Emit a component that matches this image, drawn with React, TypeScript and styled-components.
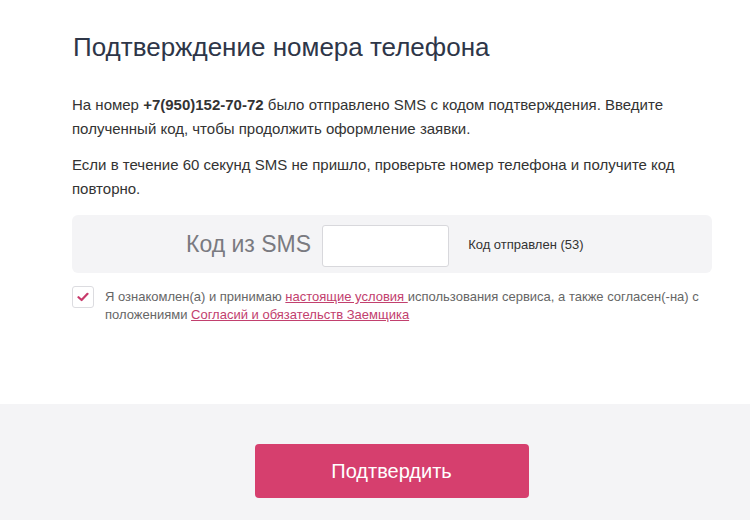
import styled, { createGlobalStyle } from "styled-components";

const GlobalStyle = createGlobalStyle`
  html, body {
    margin: 0;
    padding: 0;
    background: #ffffff;
    font-family: "Liberation Sans", Arial, sans-serif;
  }
`;

const Page = styled.div`
  width: 750px;
  height: 520px;
  display: flex;
  flex-direction: column;
  overflow: hidden;
`;

const Main = styled.div`
  height: 404px;
  box-sizing: border-box;
  padding: 29px 38px 0 72px;
`;

const Title = styled.h1`
  margin: 0 0 28px;
  font-size: 26px;
  font-weight: normal;
  line-height: 36px;
  color: #2e3648;
  padding-left: 1px;
`;

const Text = styled.p`
  margin: 0 0 12px;
  font-size: 15px;
  line-height: 24px;
  color: #333333;
`;

const SmsBox = styled.div`
  margin-top: 14px;
  height: 58px;
  background: #f4f4f6;
  border-radius: 6px;
  display: flex;
  align-items: center;
  padding-left: 114px;
`;

const SmsLabel = styled.label`
  font-size: 23px;
  color: #7a7a80;
  margin-right: 11px;
`;

const CodeInput = styled.input`
  width: 127px;
  height: 42px;
  box-sizing: border-box;
  border: 1px solid #d8d8dc;
  border-radius: 3px;
  background: #fff;
  margin-top: 4px;
  font-size: 18px;
  padding: 0 10px;
  outline: none;
`;

const SentNote = styled.span`
  font-size: 13px;
  color: #333;
  margin-left: 19px;
`;

const Agree = styled.div`
  display: flex;
  align-items: flex-start;
  margin-top: 13px;
  gap: 11px;
`;

const Box = styled.span`
  flex: none;
  width: 22px;
  height: 22px;
  box-sizing: border-box;
  border: 1px solid #dcdce0;
  border-radius: 3px;
  display: flex;
  align-items: center;
  justify-content: center;
  background: #fff;
`;

const AgreeText = styled.div`
  font-size: 13px;
  line-height: 18px;
  color: #666;
  padding-top: 2px;
`;

const Link = styled.a`
  color: #c2406e;
  text-decoration: underline;
`;

const Footer = styled.div`
  flex: 1;
  background: #f4f4f6;
  display: flex;
  justify-content: center;
  padding: 40px 0 0 33px;
`;

const Button = styled.button`
  width: 274px;
  height: 54px;
  border: none;
  border-radius: 4px;
  background: #d63f6e;
  color: #fff;
  font-family: "Liberation Sans", Arial, sans-serif;
  font-size: 20px;
  cursor: pointer;
`;

export default function App() {
  return (
    <>
      <GlobalStyle />
      <Page>
        <Main>
          <Title>Подтверждение номера телефона</Title>
          <Text>
            На номер <b>+7(950)152-70-72</b> было отправлено SMS с кодом
            подтверждения. Введите полученный код, чтобы продолжить оформление
            заявки.
          </Text>
          <Text>
            Если в течение 60 секунд SMS не пришло, проверьте номер телефона и
            получите код повторно.
          </Text>
          <SmsBox>
            <SmsLabel>Код из SMS</SmsLabel>
            <CodeInput />
            <SentNote>Код отправлен (53)</SentNote>
          </SmsBox>
          <Agree>
            <Box>
              <svg width="12" height="10" viewBox="0 0 12 10">
                <path
                  d="M1.5 5.2 L4.6 8 L10.5 1.8"
                  fill="none"
                  stroke="#c83a6b"
                  strokeWidth="2.2"
                  strokeLinecap="round"
                  strokeLinejoin="round"
                />
              </svg>
            </Box>
            <AgreeText>
              Я ознакомлен(а) и принимаю <Link>настоящие условия </Link>
              использования сервиса, а также согласен(-на) с положениями{" "}
              <Link>Согласий и обязательств Заемщика</Link>
            </AgreeText>
          </Agree>
        </Main>
        <Footer>
          <Button>Подтвердить</Button>
        </Footer>
      </Page>
    </>
  );
}
